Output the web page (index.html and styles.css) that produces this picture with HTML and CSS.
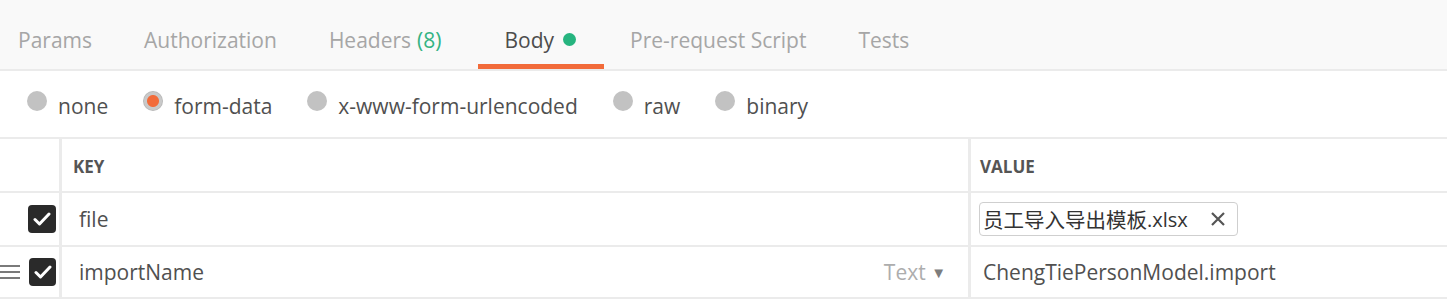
FILE: index.html
```html
<!DOCTYPE html>
<html>
<head>
<title>Request Body</title>
<link rel="stylesheet" href="styles.css">
</head>
<body>
<div class="tabs">
  <div class="tab first">Params</div>
  <div class="tab">Authorization</div>
  <div class="tab">Headers <span class="count">(8)</span></div>
  <div class="tab active">Body <span class="dot"></span></div>
  <div class="tab">Pre-request Script</div>
  <div class="tab">Tests</div>
</div>

<div class="modes">
  <label class="mode"><span class="radio"></span>none</label>
  <label class="mode"><span class="radio on"></span>form-data</label>
  <label class="mode"><span class="radio"></span>x-www-form-urlencoded</label>
  <label class="mode"><span class="radio"></span>raw</label>
  <label class="mode"><span class="radio"></span>binary</label>
</div>

<div class="table">
  <div class="row head">
    <div class="c-check"></div>
    <div class="c-key">KEY</div>
    <div class="c-value">VALUE</div>
  </div>
  <div class="row">
    <div class="c-check"><span class="box">
      <svg width="18" height="14" viewBox="0 0 18 14"><path d="M2 7.5 L6.5 12 L16 2" fill="none" stroke="#fff" stroke-width="3" stroke-linecap="round" stroke-linejoin="round"/></svg>
    </span></div>
    <div class="c-key">file</div>
    <div class="c-value">
      <span class="chip"><span class="cjk">员工导入导出模板</span>.xlsx<svg class="x" width="16" height="16" viewBox="0 0 16 16"><path d="M2 2 L14 14 M14 2 L2 14" stroke="#555" stroke-width="2.2"/></svg></span>
    </div>
  </div>
  <div class="row r2">
    <div class="c-check">
      <span class="drag"><i></i><i></i><i></i></span>
      <span class="box">
      <svg width="18" height="14" viewBox="0 0 18 14"><path d="M2 7.5 L6.5 12 L16 2" fill="none" stroke="#fff" stroke-width="3" stroke-linecap="round" stroke-linejoin="round"/></svg>
    </span></div>
    <div class="c-key">importName <span class="type">Text <span class="caret">▼</span></span></div>
    <div class="c-value">ChengTiePersonModel.import</div>
  </div>
</div>
</body>
</html>
```
FILE: styles.css
```css
body{
  margin: 0;
  font-family: "Open Sans", "Noto Sans", sans-serif;
  color: #505050;
  background: #fff;
}
.tabs{
  display: flex;
  height: 69px;
  background: #f9f9f9;
  border-bottom: 2px solid #ebebeb;
}
.tab{
  position: relative;
  display: flex;
  align-items: center;
  padding: 10px 26px 0;
  font-size: 21px;
  color: #a6a6a6;
}
.tab.first{
  padding-left: 18px;
}
.tab.active{
  color: #4d4d4d;
  margin-left: 11px;
  padding-right: 28px;
}
.tab.active::after{
  content: "";
  position: absolute;
  left: 0;
  right: 0;
  bottom: 0;
  height: 5px;
  background: #f26b3a;
}
.count{
  color: #35b383;
  margin-left: 6px;
}
.dot{
  display: inline-block;
  width: 13px;
  height: 13px;
  border-radius: 50%;
  background: #26b47f;
  margin-left: 9px;
}
.modes{
  display: flex;
  align-items: center;
  gap: 35px;
  height: 66px;
  padding-left: 27px;
  border-bottom: 2px solid #ebebeb;
}
.mode{
  display: flex;
  align-items: center;
  gap: 11px;
  font-size: 21px;
  color: #505050;
  padding-top: 4px;
}
.radio{
  width: 20px;
  height: 20px;
  border-radius: 50%;
  background: #c2c2c2;
  margin-top: -10px;
}
.radio.on{
  background: radial-gradient(circle, #f26b3a 0 5.5px, #c9c9c9 6.5px 8.5px, #b8b8b8 9.5px);
}
.row{
  display: flex;
  height: 52px;
  border-bottom: 2px solid #ebebeb;
}
.row.r2{
  height: 50px;
}
.c-check{
  width: 62px;
  flex: none;
  display: flex;
  align-items: center;
  justify-content: flex-end;
  padding-right: 3px;
  box-sizing: border-box;
  border-right: 3px solid #ebebeb;
}
.c-key{
  flex: 1;
  display: flex;
  align-items: center;
  padding-left: 17px;
  font-size: 21px;
  border-right: 3px solid #ebebeb;
}
.c-value{
  width: 476px;
  flex: none;
  display: flex;
  align-items: center;
  padding-left: 12px;
  box-sizing: border-box;
  font-size: 21px;
}
.head .c-key, .head .c-value{
  font-size: 17px;
  font-weight: 700;
  color: #555;
  padding-left: 11px;
  padding-top: 2px;
}
.head .c-value{
  padding-left: 9px;
}
.box{
  width: 28px;
  height: 28px;
  border-radius: 4px;
  background: #2a2a2a;
  display: flex;
  align-items: center;
  justify-content: center;
}
.drag{
  display: flex;
  flex-direction: column;
  gap: 4px;
  margin-right: 9px;
}
.drag i{
  display: block;
  width: 20px;
  height: 2px;
  background: #7a7a7a;
}
.type{
  margin-left: auto;
  margin-right: 22px;
  color: #adadad;
}
.caret{
  font-size: 15px;
  color: #7d7d7d;
  vertical-align: 2px;
}
.chip{
  display: flex;
  align-items: center;
  height: 32px;
  padding: 0 11px 0 3px;
  margin-left: -4px;
  border: 1px solid #cfcfcf;
  border-radius: 4px;
  font-size: 20px;
  color: #333;
}
.cjk{
  font-family: "Noto Sans CJK SC", sans-serif;
  font-size: 20.5px;
}
.x{
  margin-left: 22px;
}
```
